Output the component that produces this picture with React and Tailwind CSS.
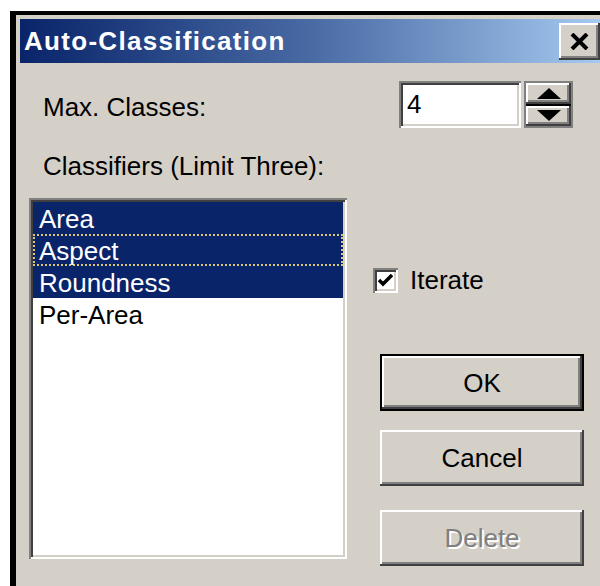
import React, { useState } from 'react';

const raised =
  'bg-[#d4d0c8] shadow-[inset_-2px_-2px_0_#404040,inset_2px_2px_0_#ffffff,inset_-4px_-4px_0_#808080]';
const sunken =
  'shadow-[inset_2px_2px_0_#808080,inset_-2px_-2px_0_#ffffff,inset_4px_4px_0_#404040,inset_-4px_-4px_0_#d4d0c8]';

const classifiers = ['Area', 'Aspect', 'Roundness', 'Per-Area'];

const DialogButton = ({ label, isDefault, disabled, className }) => (
  <div className={`w-[204px] ${isDefault ? 'border-2 border-black' : ''} ${className}`}>
    <button
      className={`${raised} w-full ${isDefault ? 'h-[53px]' : 'h-[56px]'} flex items-center justify-center text-[26px] leading-none ${
        disabled ? 'text-[#808080] [text-shadow:2px_2px_0_#ffffff]' : 'text-black'
      }`}
    >
      {label}
    </button>
  </div>
);

const App = () => {
  const [maxClasses] = useState('4');
  const [selected] = useState(['Area', 'Aspect', 'Roundness']);
  const [iterate] = useState(true);

  return (
    <div
      className="w-[600px] h-[586px] overflow-hidden bg-white"
      style={{ fontFamily: '"Liberation Sans", Arial, sans-serif' }}
    >
      <div className="ml-[10px] mt-[11px] w-[620px] h-[600px] border-l-[6px] border-t-[4px] border-black bg-[#d4d0c8] pl-[4px] pt-[4px]">
        {/* title bar */}
        <div className="h-[44px] w-[583px] flex items-center justify-between bg-linear-to-r from-[#0a246a] via-[#4a6aa4] to-[#a6caf0] pl-[4px] pr-[3px]">
          <span className="text-white font-bold text-[26px] tracking-[1.3px] leading-none">
            Auto-Classification
          </span>
          <div className={`${raised} w-[41px] h-[37px] flex items-center justify-center`}>
            <svg width="19" height="17" viewBox="0 0 19 17">
              <path d="M2 1 L17 16 M17 1 L2 16" stroke="#000" strokeWidth="4" />
            </svg>
          </div>
        </div>

        {/* body */}
        <div className="flex">
          <div className="ml-[9px] w-[318px] text-[26px] text-black">
            <div className="mt-[29px] ml-[14px] leading-[30px]">Max. Classes:</div>
            <div className="mt-[29px] ml-[14px] leading-[30px]">Classifiers (Limit Three):</div>
            <div className={`mt-[17px] h-[361px] bg-white p-[4px] ${sunken}`}>
              {classifiers.map((name) => {
                const isSel = selected.includes(name);
                return (
                  <div
                    key={name}
                    className={`h-[32px] leading-[30px] pl-[4px] ${
                      isSel ? 'bg-[#0a246a] text-white' : 'text-black'
                    } ${
                      name === 'Aspect'
                        ? 'border-2 border-dotted border-[#d8c878]'
                        : 'border-2 border-transparent'
                    }`}
                  >
                    {name}
                  </div>
                );
              })}
            </div>
          </div>

          <div className="ml-[26px] w-[215px] text-[26px] text-black">
            {/* spin box */}
            <div className="mt-[18px] ml-[26px] flex items-stretch h-[47px]">
              <div className={`w-[122px] bg-white pl-[8px] flex items-center ${sunken}`}>
                {maxClasses}
              </div>
              <div className="ml-[3px] w-[49px] flex flex-col bg-[#808080] p-[2px] gap-[2px]">
                <div className="flex-1 bg-black flex flex-col gap-[2px]">
                  <div className={`${raised} flex-1 flex items-center justify-center`}>
                    <svg width="24" height="11" viewBox="0 0 24 11">
                      <path d="M12 0 L24 11 L0 11 Z" fill="#000" />
                    </svg>
                  </div>
                  <div className={`${raised} flex-1 flex items-center justify-center`}>
                    <svg width="24" height="11" viewBox="0 0 24 11">
                      <path d="M0 0 L24 0 L12 11 Z" fill="#000" />
                    </svg>
                  </div>
                </div>
              </div>
            </div>

            {/* iterate checkbox */}
            <div className="mt-[140px] flex items-center h-[25px]">
              <div className={`w-[25px] h-[25px] bg-white flex items-center justify-center ${sunken}`}>
                {iterate && (
                  <svg width="15" height="13" viewBox="0 0 15 13">
                    <path d="M1 6 L5 10 L14 1" stroke="#000" strokeWidth="3.5" fill="none" />
                  </svg>
                )}
              </div>
              <span className="ml-[12px] leading-[25px]">Iterate</span>
            </div>

            <DialogButton label="OK" isDefault className="mt-[61px] ml-[7px]" />
            <DialogButton label="Cancel" className="mt-[19px] ml-[7px]" />
            <DialogButton label="Delete" disabled className="mt-[24px] ml-[7px]" />
          </div>
        </div>
      </div>
    </div>
  );
};

export default App;
